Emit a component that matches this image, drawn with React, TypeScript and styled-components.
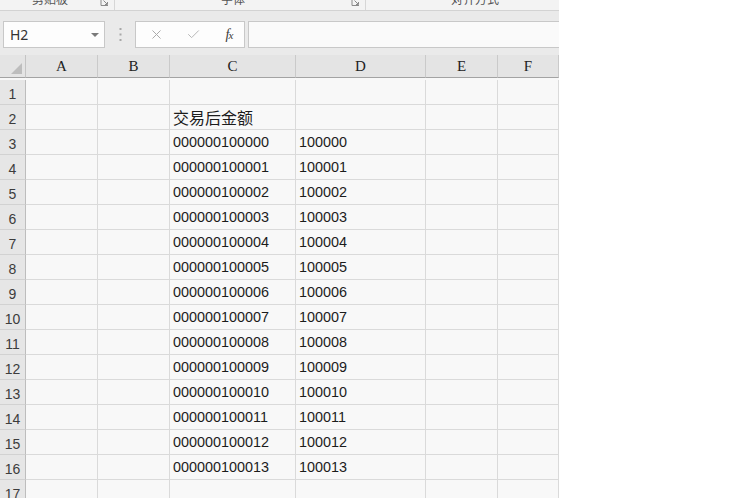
import React from "react";
import styled, { createGlobalStyle } from "styled-components";
import { X, Check } from "lucide-react";

const Global = createGlobalStyle`
  html, body { margin: 0; padding: 0; background: #ffffff; }
  #root { width: 748px; height: 498px; background: #ffffff; }
`;

const Pane = styled.div`
  width: 559px;
  height: 498px;
  overflow: hidden;
  background: #f8f8f8;
  display: flex;
  flex-direction: column;
`;

const RibbonStrip = styled.div`
  height: 10px;
  flex: none;
  display: flex;
  background: #f3f3f3;
  border-bottom: 1px solid #d3d3d3;
  overflow: hidden;
`;

const Group = styled.div<{ $w: number; $sep?: boolean }>`
  width: ${(p) => p.$w}px;
  flex: none;
  display: flex;
  align-items: flex-start;
  border-right: ${(p) => (p.$sep ? "1px solid #d6d6d6" : "none")};
  box-sizing: border-box;
`;

const GroupLabel = styled.div`
  flex: 1;
  text-align: center;
  font-family: "Noto Sans CJK SC", "Liberation Sans", sans-serif;
  font-size: 12px;
  line-height: 12px;
  color: #555;
  margin-top: -7px;
`;

const Launcher = styled.div`
  width: 14px;
  flex: none;
  display: flex;
  justify-content: flex-start;
`;

const FormulaRow = styled.div`
  flex: none;
  display: flex;
  align-items: stretch;
  height: 27px;
  padding: 10px 0 7px 3px;
  background: #eaeaea;
`;

const NameBox = styled.div`
  width: 102px;
  box-sizing: border-box;
  border: 1px solid #c8c8c8;
  background: #fdfdfd;
  display: flex;
  align-items: center;
  justify-content: space-between;
  padding: 0 5px 0 6px;
  font-family: "Noto Sans", "Liberation Sans", sans-serif;
  font-size: 14px;
  color: #333;
`;

const Caret = styled.span`
  width: 0;
  height: 0;
  border-left: 4px solid transparent;
  border-right: 4px solid transparent;
  border-top: 4px solid #7a7a7a;
  margin-top: 1px;
`;

const DotsSlot = styled.div`
  width: 30px;
  flex: none;
  display: flex;
  align-items: center;
  justify-content: center;
`;

const FxBox = styled.div`
  width: 110px;
  flex: none;
  box-sizing: border-box;
  border: 1px solid #c8c8c8;
  background: #fdfdfd;
  display: grid;
  grid-template-columns: 36px 38px 34px;
  align-items: center;
  justify-items: center;
  padding-left: 2px;
`;

const Fx = styled.span`
  font-family: "Liberation Serif", serif;
  font-style: italic;
  font-size: 14px;
  color: #3a3a3a;
  letter-spacing: -1px;
  & > small { font-size: 11px; }
`;

const FormulaInput = styled.div`
  flex: 1;
  margin-left: 3px;
  box-sizing: border-box;
  border: 1px solid #c8c8c8;
  border-right: none;
  background: #fafafa;
`;

const Grid = styled.div`
  display: grid;
  grid-template-columns: 26px 72px 72px 126px 130px 72px 61px;
  grid-auto-rows: 25px;
`;

const Corner = styled.div`
  height: 23px;
  box-sizing: border-box;
  background: #e4e4e4;
  border-right: 1px solid #c4c4c4;
  border-bottom: 1px solid #a3a3a3;
  display: flex;
  align-items: flex-end;
  justify-content: flex-end;
  padding: 0 3px 3px 0;
`;

const ColHead = styled.div`
  height: 23px;
  box-sizing: border-box;
  background: #e4e4e4;
  border-right: 1px solid #cacaca;
  border-bottom: 1px solid #a3a3a3;
  display: flex;
  align-items: flex-end;
  justify-content: center;
  padding-bottom: 2px;
  font-family: "Liberation Serif", serif;
  font-size: 15px;
  color: #222;
`;

const RowHead = styled.div`
  box-sizing: border-box;
  background: #e6e6e6;
  border-right: 1px solid #bdbdbd;
  border-bottom: 1px solid #d2d2d2;
  display: flex;
  align-items: flex-end;
  justify-content: center;
  padding-bottom: 2px;
  font-family: "Liberation Sans", sans-serif;
  font-size: 14px;
  color: #3c3c3c;
`;

const Cell = styled.div<{ $cjk?: boolean }>`
  box-sizing: border-box;
  border-right: 1px solid #dadada;
  border-bottom: 1px solid #dadada;
  display: flex;
  align-items: center;
  padding: 0 0 0 3px;
  white-space: nowrap;
  overflow: visible;
  font-family: ${(p) =>
    p.$cjk ? `"Noto Sans CJK SC", sans-serif` : `"Liberation Sans", "Noto Sans CJK SC", sans-serif`};
  font-size: ${(p) => (p.$cjk ? "16px" : "14.4px")};
  color: #1c1c1c;
`;

const cols = ["A", "B", "C", "D", "E", "F"];

const pad = (n: number) => String(n).padStart(2, "0");

function cellValue(row: number, col: number): { text: string; cjk?: boolean } {
  if (row === 2 && col === 2) return { text: "交易后金额", cjk: true };
  if (row >= 3 && row <= 16) {
    const i = row - 3;
    if (col === 2) return { text: "0000001000" + pad(i) };
    if (col === 3) return { text: "1000" + pad(i) };
  }
  return { text: "" };
}

const LauncherIcon = () => (
  <svg width="9" height="7" viewBox="0 0 9 7">
    <path d="M1 0 V5.5 H8" fill="none" stroke="#8a8a8a" strokeWidth="1" />
    <path d="M3.5 0.5 L7 4" stroke="#8a8a8a" strokeWidth="1" />
    <path d="M5 4.5 H7.5 V2" fill="none" stroke="#8a8a8a" strokeWidth="1" />
  </svg>
);

const Dots = () => (
  <svg width="3" height="13" viewBox="0 0 3 13">
    <rect x="0.5" y="0" width="2" height="2" fill="#a8a8a8" />
    <rect x="0.5" y="5.5" width="2" height="2" fill="#a8a8a8" />
    <rect x="0.5" y="11" width="2" height="2" fill="#a8a8a8" />
  </svg>
);

export default function App() {
  const rows = Array.from({ length: 17 }, (_, i) => i + 1);
  return (
    <>
      <Global />
      <Pane>
        <RibbonStrip>
          <Group $w={115} $sep>
            <GroupLabel>剪贴板</GroupLabel>
            <Launcher>
              <LauncherIcon />
            </Launcher>
          </Group>
          <Group $w={251} $sep>
            <GroupLabel>字体</GroupLabel>
            <Launcher>
              <LauncherIcon />
            </Launcher>
          </Group>
          <Group $w={232}>
            <GroupLabel>对齐方式</GroupLabel>
            <Launcher />
          </Group>
        </RibbonStrip>
        <FormulaRow>
          <NameBox>
            <span>H2</span>
            <Caret />
          </NameBox>
          <DotsSlot>
            <Dots />
          </DotsSlot>
          <FxBox>
            <X size={15} color="#ababab" strokeWidth={1.6} />
            <Check size={15} color="#b8b8b8" strokeWidth={1.6} />
            <Fx>
              f<small>x</small>
            </Fx>
          </FxBox>
          <FormulaInput />
        </FormulaRow>
        <Grid>
          <Corner>
            <svg width="11" height="11" viewBox="0 0 11 11">
              <polygon points="11,0 11,11 0,11" fill="#bdbdbd" />
            </svg>
          </Corner>
          {cols.map((c) => (
            <ColHead key={c}>{c}</ColHead>
          ))}
          {rows.map((r) => (
            <React.Fragment key={r}>
              <RowHead>{r}</RowHead>
              {cols.map((c, ci) => {
                const v = cellValue(r, ci);
                return (
                  <Cell key={c} $cjk={v.cjk}>
                    {v.text}
                  </Cell>
                );
              })}
            </React.Fragment>
          ))}
        </Grid>
      </Pane>
    </>
  );
}
